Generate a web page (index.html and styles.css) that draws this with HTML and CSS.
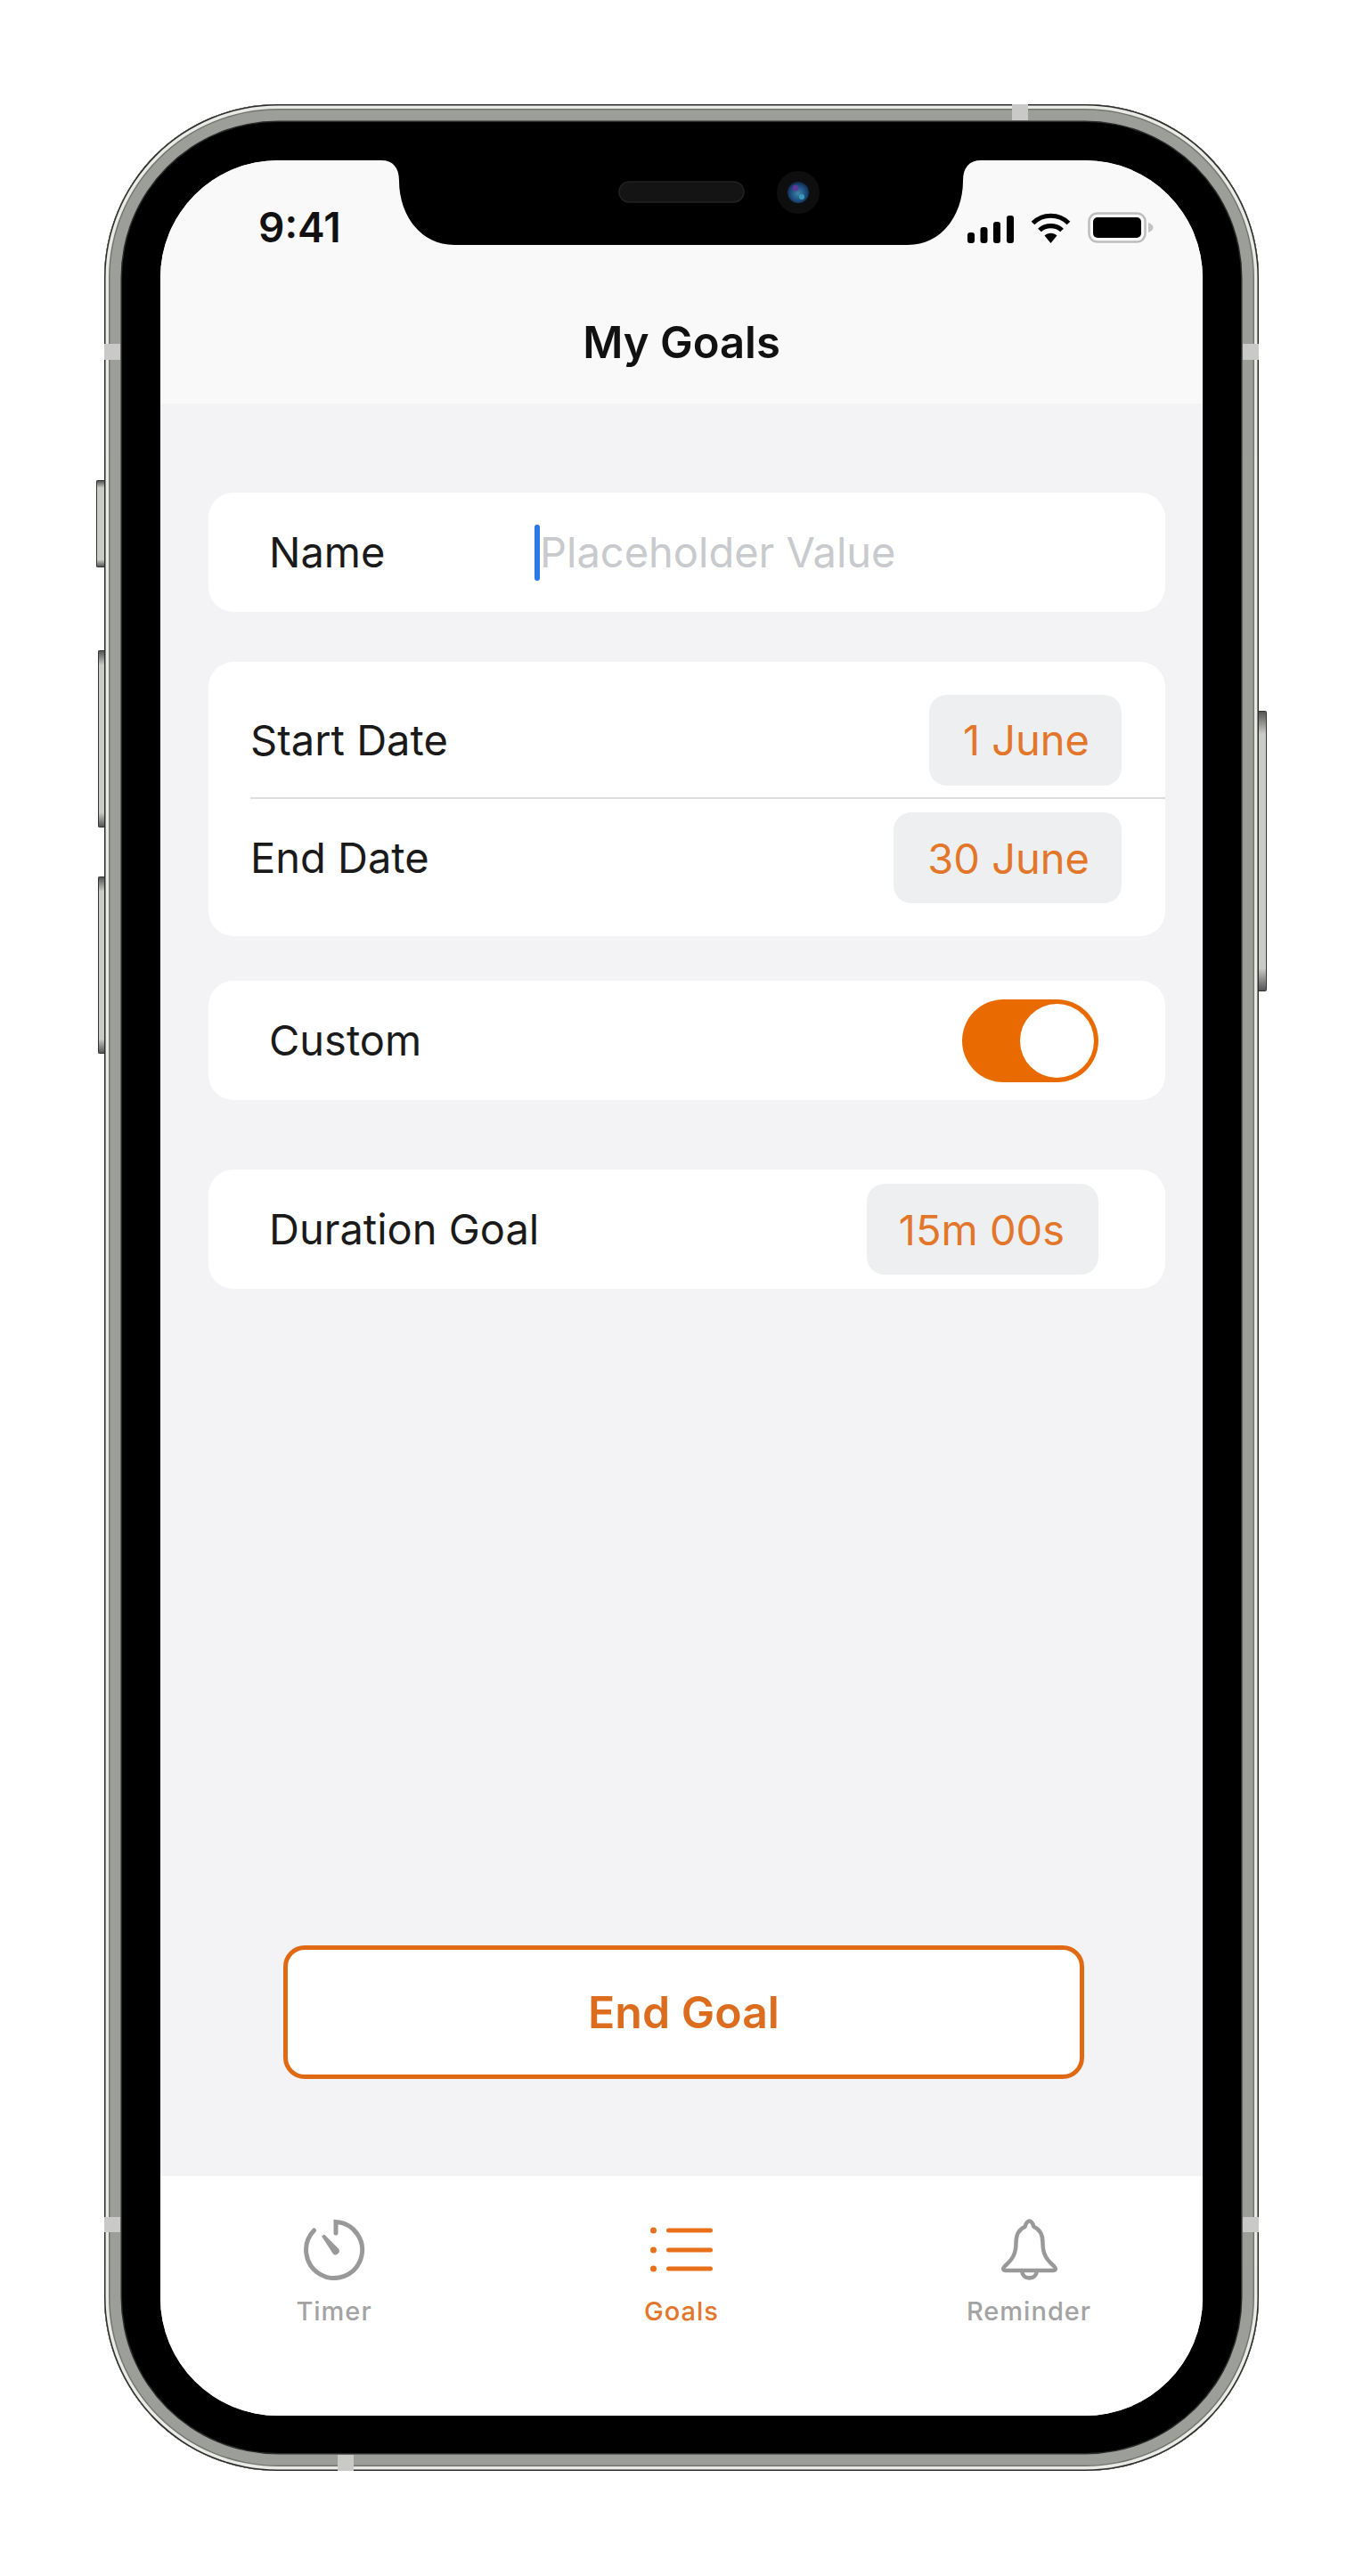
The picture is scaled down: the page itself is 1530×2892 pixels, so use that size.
FILE: index.html
```html
<!DOCTYPE html>
<html lang="en">
<head>
<meta charset="utf-8">
<title>My Goals</title>
<link rel="stylesheet" href="styles.css">
</head>
<body>
<div class="phone">
  <span class="side side-mute"></span>
  <span class="side side-up"></span>
  <span class="side side-down"></span>
  <span class="side side-power"></span>
  <span class="band band-top"></span>
  <span class="band band-left1"></span>
  <span class="band band-right1"></span>
  <span class="band band-left2"></span>
  <span class="band band-right2"></span>
  <span class="band band-bottom"></span>

  <div class="screen">
    <header class="header">
      <div class="status">
        <span class="time">9:41</span>
        <div class="status-icons">
          <svg class="i-signal" viewBox="0 0 52 31"><g fill="#000"><rect x="0" y="19" width="8" height="12" rx="3"/><rect x="14.5" y="13" width="8" height="18" rx="3"/><rect x="29" y="7" width="8" height="24" rx="3"/><rect x="44" y="0" width="8" height="31" rx="3"/></g></svg>
          <svg class="i-wifi" viewBox="0 0 45 35"><g fill="none" stroke="#000" stroke-width="5.2"><path d="M2.5 12.5C13.5 1.5 31.500 1.500 42.500 12.500"/><path d="M10 20.500C16.500 14 28.500 14 35 20.500"/></g><path d="M15.500 26.500C19.500 22.800 25.500 22.800 29.500 26.500L22.500 35Z" fill="#000"/></svg>
          <svg class="i-battery" viewBox="0 0 74 35"><rect x="1.500" y="1.500" width="63" height="32" rx="9" fill="none" stroke="#bdbdbd" stroke-width="2.500"/><rect x="6" y="6" width="54" height="23" rx="5" fill="#000"/><path d="M68 12c3.500 1 5.500 3 5.500 5.500S71.500 22 68 23Z" fill="#c4c4c4"/></svg>
        </div>
      </div>
      <h1 class="title">My Goals</h1>
    </header>

    <main class="main">
      <section class="card card-name">
        <span class="label label-name">Name</span>
        <span class="caret"></span>
        <span class="placeholder">Placeholder Value</span>
      </section>

      <section class="card-dates">
        <div class="date-row date-row-start">
          <span class="label">Start Date</span>
          <span class="pill pill-date">1 June</span>
        </div>
        <div class="date-row date-row-end">
          <span class="label">End Date</span>
          <span class="pill pill-date">30 June</span>
        </div>
      </section>

      <section class="card card-custom">
        <span class="label">Custom</span>
        <span class="toggle"><span class="knob"></span></span>
      </section>

      <section class="card card-duration">
        <span class="label">Duration Goal</span>
        <span class="pill pill-duration">15m 00s</span>
      </section>

      <button class="end-btn" type="button">End Goal</button>
    </main>

    <nav class="tabs">
      <div class="tab">
        <svg class="tab-icon" width="69" height="69" viewBox="0 0 69 69"><path d="M36 16V3.500A31.500 31.500 0 1 1 11.500 13" fill="none" stroke="#999" stroke-width="5" stroke-linecap="round"/><path d="M20 19.500 23 17.500 39 33.500A4.300 4.300 0 0 1 33 39.500Z" fill="#999"/></svg>
        <span class="tab-label">Timer</span>
      </div>
      <div class="tab tab-active">
        <svg class="tab-icon" width="70" height="69" viewBox="0 0 70 69"><g fill="#e8701a"><circle cx="3.500" cy="13" r="3.500"/><circle cx="3.500" cy="35" r="3.500"/><circle cx="3.500" cy="56" r="3.500"/><rect x="18" y="10.500" width="52" height="5" rx="2.500"/><rect x="18" y="32.500" width="52" height="5" rx="2.500"/><rect x="18" y="53.500" width="52" height="5" rx="2.500"/></g></svg>
        <span class="tab-label">Goals</span>
      </div>
      <div class="tab">
        <svg class="tab-icon" width="65" height="69" viewBox="0 0 65 69"><g fill="none" stroke="#999" stroke-width="4.500" stroke-linejoin="round" stroke-linecap="round"><path d="M32.500 2.500C35.500 2.500 36.500 6 37.500 9 45 12 47.500 19 47.500 27C47.500 40 52 46 60 53C63 56 62 58 59 58H6C3 58 2 56 5 53C13 46 17.500 40 17.500 27C17.500 19 20 12 27.500 9C28.500 6 29.500 2.500 32.500 2.500Z"/><path d="M24 58C24.500 63.500 28 66.500 32.500 66.500S40.500 63.500 41 58"/></g></svg>
        <span class="tab-label">Reminder</span>
      </div>
    </nav>
  </div>

  <svg class="notch" width="673" height="95" viewBox="0 0 673 95">
    <defs>
      <radialGradient id="lens" cx="0.5" cy="0.55" r="0.6"><stop offset="0" stop-color="#3f86a8"/><stop offset="0.6" stop-color="#1c4a7c"/><stop offset="1" stop-color="#0c1c38"/></radialGradient>
    </defs>
    <path d="M0 0H673C660 0 653 8 653 23C653 60 630 95 591 95H82C43 95 20 60 20 23C20 8 13 0 0 0Z" fill="#000"/>
    <rect x="267" y="24" width="140" height="23" rx="11.500" fill="#141414" stroke="#222" stroke-width="1.500"/>
    <circle cx="468" cy="36" r="24" fill="#0e0e0e"/>
    <circle cx="468" cy="36" r="12" fill="url(#lens)"/>
    <circle cx="465" cy="31" r="3.500" fill="#5a3a98"/>
    <circle cx="472" cy="41" r="3" fill="#3a9ab8"/>
  </svg>
</div>
</body>
</html>
```

FILE: styles.css
```css
* { box-sizing: border-box; }

html, body { margin: 0; background: #fff; }

body {
  width: 1530px;
  height: 2892px;
  padding: 117px 0 0 117px;
  font-family: Inter, "Liberation Sans", sans-serif;
}

.phone {
  position: relative;
  width: 1296px;
  height: 2657px;
  padding: 63px;
  background: #000;
  border-radius: 195px;
  box-shadow:
    inset 0 0 0 1.5px #2b2b2b,
    inset 0 0 0 5px #e9e9e5,
    inset 0 0 0 6.5px #73756f,
    inset 0 0 0 18.500px #9c9f99,
    inset 0 0 0 20px #2c2c2c;
}

/* Side buttons */
.side {
  position: absolute;
  border: 1.5px solid #333;
  background: linear-gradient(#555, #c9cbc6 8%, #c9cbc6 92%, #555);
}
.side-mute { left: -9px; top: 422px; width: 9px; height: 98px; border-right: 0; border-radius: 2px 0 0 2px; }
.side-up { left: -7px; top: 613px; width: 7px; height: 199px; border-right: 0; border-radius: 2px 0 0 2px; }
.side-down { left: -7px; top: 867px; width: 7px; height: 199px; border-right: 0; border-radius: 2px 0 0 2px; }
.side-power { right: -9px; top: 681px; width: 9px; height: 315px; border-left: 0; border-radius: 0 2px 2px 0; }

/* Antenna bands */
.band { position: absolute; background: #c9cac7; }
.band-top { left: 1019px; top: 0; width: 18px; height: 18px; }
.band-left1 { left: 0; top: 269px; width: 18px; height: 18px; }
.band-right1 { right: 0; top: 269px; width: 18px; height: 18px; }
.band-left2 { left: 0; top: 2372px; width: 18px; height: 17px; }
.band-right2 { right: 0; top: 2372px; width: 18px; height: 17px; }
.band-bottom { left: 262px; bottom: 0; width: 18px; height: 18px; }

/* Screen */
.screen {
  width: 1170px;
  height: 2532px;
  display: flex;
  flex-direction: column;
  overflow: hidden;
  background: #f3f3f6;
  border-radius: 132px;
}

.notch { position: absolute; left: 311px; top: 63px; }

.header {
  height: 273px;
  background: #f9f9f9;
  display: flex;
  flex-direction: column;
}

.status {
  height: 175px;
  padding: 50px 55px 0 110px;
  display: flex;
  justify-content: space-between;
  align-items: flex-start;
}

.time {
  font-size: 46px;
  line-height: 50px;
  font-weight: 600;
  color: #111;
}

.status-icons {
  display: flex;
  align-items: center;
  gap: 19px;
  height: 50px;
}
.i-signal { width: 52px; height: 31px; margin-top: 5px; }
.i-wifi { width: 45px; height: 35px; }
.i-battery { width: 74px; height: 35px; }

.title {
  margin: 0;
  text-align: center;
  font-size: 49px;
  line-height: 60px;
  font-weight: 600;
  color: #111;
}

.main {
  flex: 1;
  padding: 100px 42px 0 54px;
  display: flex;
  flex-direction: column;
}

.card {
  height: 134px;
  background: #fff;
  border-radius: 28px;
  display: flex;
  align-items: center;
  padding: 0 75px 0 68px;
}

.label {
  font-size: 47px;
  line-height: 60px;
  color: #1a1a1a;
}

.card-custom, .card-duration { justify-content: space-between; }
.card-custom { margin-top: 50px; }
.card-duration { margin-top: 78px; }

.label-name { width: 298px; }
.caret {
  width: 6px;
  height: 63px;
  border-radius: 3px;
  background: #2a78e4;
}
.placeholder {
  font-size: 47px;
  line-height: 60px;
  color: #c9cacd;
}

.card-dates {
  margin-top: 56px;
  height: 308px;
  background: #fff;
  border-radius: 28px;
  padding-left: 47px;
}
.date-row {
  display: flex;
  justify-content: space-between;
  align-items: center;
  padding-right: 49px;
}
.date-row-start {
  height: 154px;
  padding-top: 37px;
  padding-bottom: 14px;
  border-bottom: 2px solid #dcdde0;
}
.date-row-end {
  height: 154px;
  padding-top: 15px;
  padding-bottom: 37px;
}

.pill {
  height: 102px;
  padding: 0 36px 0 38px;
  display: flex;
  align-items: center;
  font-size: 47px;
  color: #e2762a;
  background: #eeeff1;
  border-radius: 20px;
}
.pill-duration { padding: 0 38px 0 36px; }

.toggle {
  width: 153px;
  height: 93px;
  padding: 5px;
  display: flex;
  justify-content: flex-end;
  background: #e96b00;
  border-radius: 47px;
}
.knob {
  width: 83px;
  height: 83px;
  border-radius: 50%;
  background: #fff;
}

.end-btn {
  width: 899px;
  height: 150px;
  margin: auto 0 109px 84px;
  background: #fff;
  border: 5px solid #e06a14;
  border-radius: 24px;
  font-family: inherit;
  font-size: 50px;
  font-weight: 600;
  color: #dc6c1e;
}

.tabs {
  height: 269px;
  background: #fff;
  display: grid;
  grid-template-columns: repeat(3, 1fr);
  align-items: start;
  padding-top: 48px;
}
.tab {
  display: flex;
  flex-direction: column;
  align-items: center;
}
.tab-label {
  margin-top: 18px;
  font-size: 29px;
  line-height: 34px;
  font-weight: 500;
  letter-spacing: 1px;
  color: #a3a3a3;
}
.tab-active .tab-label { color: #e2762a; }
```
